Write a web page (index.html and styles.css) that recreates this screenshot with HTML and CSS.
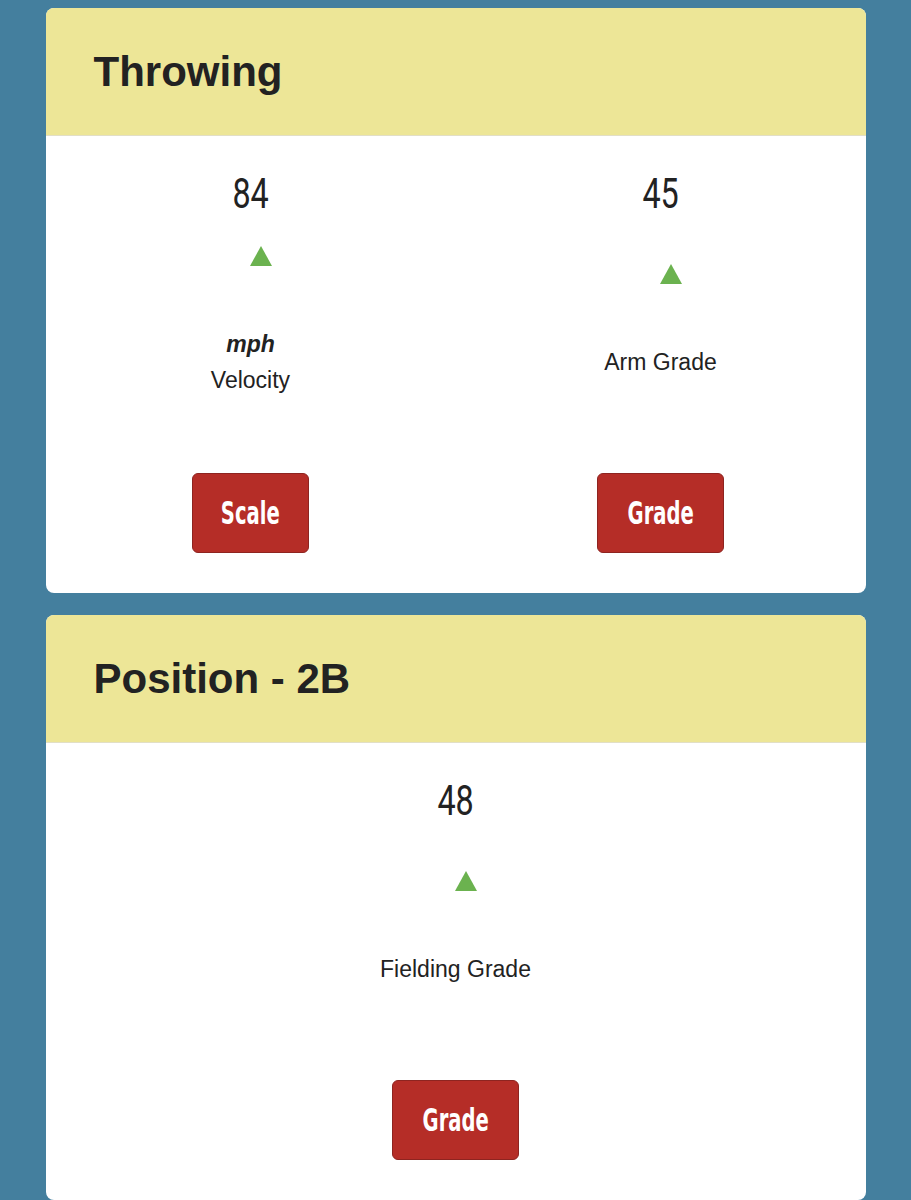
FILE: index.html
```html
<!DOCTYPE html>
<html lang="en">
  <head>
    <meta charset="UTF-8" />
    <meta name="viewport" content="width=device-width, initial-scale=1.0" />
    <title>Scouting Report</title>
    <link rel="stylesheet" href="styles.css">
  </head>
  <body>
    <div class="report">

      <div class="tool-card">
        <div class="tool-header">
          <h2>Throwing</h2>
        </div>
        <div class="tool-body">
          <div class="stat">
            <div class="stat-value"><span>84</span></div>
            <div class="stat-detail">
              <svg class="trend" width="22" height="20" viewBox="0 0 22 20"><polygon points="11,0 22,20 0,20" /></svg>
              <div class="stat-label">
                <span class="unit">mph</span>
                <span>Velocity</span>
              </div>
            </div>
            <button class="stat-button"><span>Scale</span></button>
          </div>
          <div class="stat">
            <div class="stat-value"><span>45</span></div>
            <div class="stat-detail">
              <svg class="trend" width="22" height="20" viewBox="0 0 22 20"><polygon points="11,0 22,20 0,20" /></svg>
              <div class="stat-label">
                <span>Arm Grade</span>
              </div>
            </div>
            <button class="stat-button"><span>Grade</span></button>
          </div>
        </div>
      </div>

      <div class="tool-card">
        <div class="tool-header">
          <h2>Position - 2B</h2>
        </div>
        <div class="tool-body">
          <div class="stat">
            <div class="stat-value"><span>48</span></div>
            <div class="stat-detail">
              <svg class="trend" width="22" height="20" viewBox="0 0 22 20"><polygon points="11,0 22,20 0,20" /></svg>
              <div class="stat-label">
                <span>Fielding Grade</span>
              </div>
            </div>
            <button class="stat-button"><span>Grade</span></button>
          </div>
        </div>
      </div>

    </div>
  </body>
</html>
```

FILE: styles.css
```css
:root {
  --page-color: #447f9e;
  --header-color: #ede697;
  --text-color: #222;
  --button-color: #b52d27;
  --trend-color: #6bb24f;
}

body {
  font-family: 'Liberation Sans', Arial, sans-serif;
  color: var(--text-color);
  background-color: var(--page-color);
  margin: 0;
  padding: 8px 0 0;
}

.report {
  max-width: 820px;
  margin: 0 auto;
  display: flex;
  flex-direction: column;
  gap: 22px;
}

.tool-card {
  background-color: white;
  border-radius: 8px;
  overflow: hidden;
}

.tool-header {
  background-color: var(--header-color);
  height: 127px;
  padding: 0 48px;
  display: flex;
  align-items: center;
  border-bottom: 1px solid #e2dfc6;
}

.tool-header h2 {
  margin: 0;
  font-size: 42px;
  font-weight: bold;
}

.tool-body {
  display: flex;
  padding: 34px 0 40px;
}

.stat {
  flex: 1;
  display: flex;
  flex-direction: column;
  align-items: center;
}

/* condensed numerals */
.stat-value {
  font-family: Roboto, 'Liberation Sans', sans-serif;
  font-weight: 400;
  font-size: 42px;
  line-height: 48px;
}

.stat-value span {
  display: inline-block;
  margin: 0 -5px;
  transform: scaleX(0.77);
}

.stat-detail {
  height: 208px;
  margin-bottom: 47px;
  display: flex;
  flex-direction: column;
  align-items: center;
  justify-content: center;
  gap: 60px;
}

.trend {
  display: block;
  margin-left: 22px;
  fill: var(--trend-color);
}

.stat-label {
  display: flex;
  flex-direction: column;
  align-items: center;
  font-size: 23px;
  line-height: 36px;
}

.unit {
  font-weight: bold;
  font-style: italic;
}

.stat-button {
  height: 80px;
  padding: 0 28px;
  background-color: var(--button-color);
  color: white;
  border: 1px solid #8e2420;
  border-radius: 6px;
  font-family: 'DejaVu Sans Condensed', 'Liberation Sans', sans-serif;
  font-size: 32px;
  font-weight: bold;
  cursor: pointer;
}

.stat-button span {
  display: inline-block;
  margin: 0 -14px;
  transform: scaleX(0.68);
}
```
